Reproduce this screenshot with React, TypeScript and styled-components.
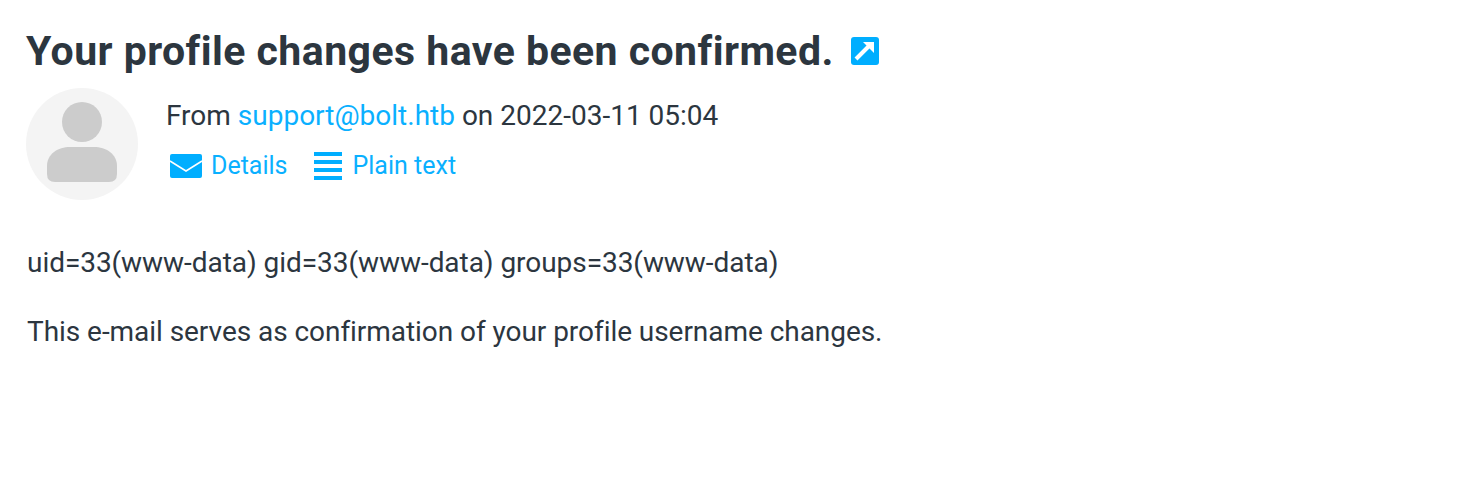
import React from "react";
import styled, { createGlobalStyle } from "styled-components";

const GlobalStyle = createGlobalStyle`
  html, body {
    margin: 0;
    padding: 0;
    background: #fff;
  }
  body {
    font-family: Roboto, "Liberation Sans", sans-serif;
    color: #2c363f;
  }
`;

const Page = styled.div`
  width: 1476px;
  height: 498px;
  padding: 26px 26px 0 26px;
  box-sizing: border-box;
  overflow: hidden;
`;

const Subject = styled.h2`
  margin: 1px 0 0;
  font-size: 41px;
  line-height: 48px;
  font-weight: 700;
  letter-spacing: 0.45px;
  display: flex;
  align-items: center;
  gap: 17px;
`;

const Header = styled.div`
  display: flex;
  margin-top: 13px;
  gap: 28px;
`;

const Avatar = styled.div`
  width: 112px;
  height: 112px;
  border-radius: 50%;
  background: #f4f4f4;
  flex: none;
`;

const Meta = styled.div`
  padding-top: 11px;
  font-size: 28px;
  line-height: 34px;
`;

const Link = styled.a`
  color: #0ab0ff;
  text-decoration: none;
`;

const Actions = styled.div`
  display: flex;
  gap: 26px;
  margin-top: 17px;
  padding-left: 4px;
  font-size: 25px;
  line-height: 32px;
`;

const Action = styled(Link)`
  display: flex;
  align-items: center;
  gap: 9px;
`;

const Body = styled.div`
  margin-top: 45px;
  padding-left: 1px;
  font-size: 28px;
  line-height: 36px;
  letter-spacing: -0.05px;
`;

const Para = styled.p`
  margin: 0 0 33px;
`;

export default function App() {
  return (
    <Page>
      <GlobalStyle />
      <Subject>
        Your profile changes have been confirmed.
        <svg width="28" height="28" viewBox="0 0 28 28">
          <rect width="28" height="28" rx="3" fill="#00aeff" />
          <path d="M5 22L19 8" fill="none" stroke="#fff" strokeWidth="4" />
          <path d="M12 5h11v11z" fill="#fff" />
        </svg>
      </Subject>
      <Header>
        <Avatar>
          <svg width="112" height="112" viewBox="0 0 112 112">
            <circle cx="56" cy="34" r="20" fill="#ccc" />
            <path d="M21 86V78C21 66 32 59 44 59H68C80 59 91 66 91 78V86Q91 94 83 94H29Q21 94 21 86z" fill="#ccc" />
          </svg>
        </Avatar>
        <Meta>
          From <Link href="#">support@bolt.htb</Link> on 2022-03-11 05:04
          <Actions>
            <Action href="#">
              <svg width="32" height="24" viewBox="0 0 32 24">
                <rect width="32" height="24" rx="2" fill="#00aeff" />
                <path d="M0 7L16 17L32 7" fill="none" stroke="#fff" strokeWidth="1.5" />
              </svg>
              Details
            </Action>
            <Action href="#">
              <svg width="30" height="28" viewBox="0 0 30 28">
                <path d="M0 0h28v4H0zM0 8h28v4H0zM0 16h28v4H0zM0 24h28v4H0z" fill="#00aeff" />
              </svg>
              Plain text
            </Action>
          </Actions>
        </Meta>
      </Header>
      <Body>
        <Para>uid=33(www-data) gid=33(www-data) groups=33(www-data)</Para>
        <Para>This e-mail serves as confirmation of your profile username changes.</Para>
      </Body>
    </Page>
  );
}
